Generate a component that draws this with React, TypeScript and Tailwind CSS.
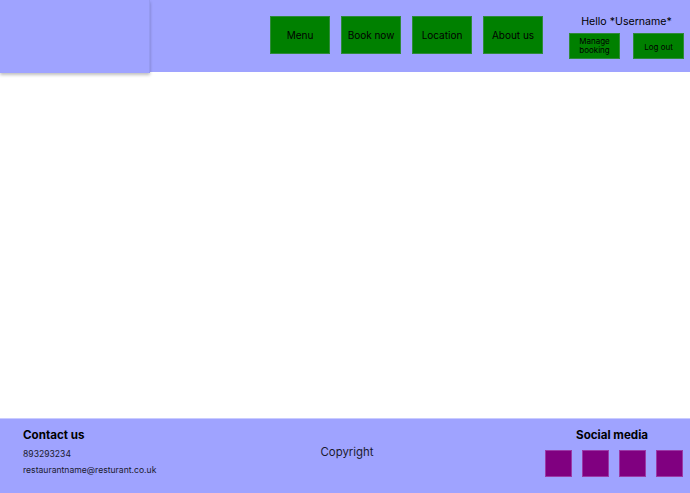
export default function App() {
  const nav = ["Menu", "Book now", "Location", "About us"]
  return (
    <div className="flex h-[493px] w-full flex-col bg-white font-['Inter',sans-serif] text-black">
      <header className="flex h-[72px] shrink-0 items-start bg-[#9fa3ff]">
        <div className="relative z-10 h-[73px] w-[150px] border-r border-[#959af0] bg-[#9fa3ff] shadow-[0_2px_3px_rgba(0,0,0,0.25)]" />
        <nav className="ml-[120px] mt-[16px] flex gap-[11px]">
          {nav.map((n) => (
            <button
              key={n}
              className="flex h-[38px] w-[60px] items-center justify-center border border-[#2f8a3a] bg-[#008000] text-[10px] text-black"
            >
              {n}
            </button>
          ))}
        </nav>
        <div className="ml-[26px] mt-[14px] flex w-[115px] flex-col items-center">
          <p className="text-[10.6px] leading-[15px]">Hello *Username*</p>
          <div className="mt-[4px] flex w-full justify-between">
            <button className="flex h-[26px] w-[51px] items-center justify-center border border-[#2f8a3a] bg-[#008000] text-[8px] leading-[9px] text-black">
              Manage
              <br />
              booking
            </button>
            <button className="flex h-[26px] w-[51px] items-center justify-center border border-[#2f8a3a] bg-[#008000] pt-[2px] text-[8px] text-black">
              Log out
            </button>
          </div>
        </div>
      </header>

      <main className="flex-1" />

      <footer className="grid h-[75px] shrink-0 grid-cols-3 border-t border-[#c9cbff] bg-[#9fa3ff] pl-[23px] pr-[7px]">
        <div className="pt-[8px]">
          <h3 className="text-[11.6px] font-bold leading-[16px]">Contact us</h3>
          <p className="mt-[5px] text-[8.6px] leading-[12px] text-[#1a1a2e]">893293234</p>
          <p className="mt-[4px] text-[8.6px] leading-[12px] text-[#1a1a2e]">restaurantname@resturant.co.uk</p>
        </div>
        <div className="flex items-center justify-center pb-[6px] pl-[4px] pr-[16px]">
          <p className="text-[11.4px] text-[#1a1a2e]">Copyright</p>
        </div>
        <div className="flex flex-col items-end pt-[9px]">
          <h3 className="mr-[35px] text-[11.6px] font-bold leading-[14px]">Social media</h3>
          <div className="mt-[8px] flex gap-[10px]">
            {[0, 1, 2, 3].map((i) => (
              <div key={i} className="h-[27px] w-[27px] border border-[#9a3aa6] bg-[#800080]" />
            ))}
          </div>
        </div>
      </footer>
    </div>
  )
}
